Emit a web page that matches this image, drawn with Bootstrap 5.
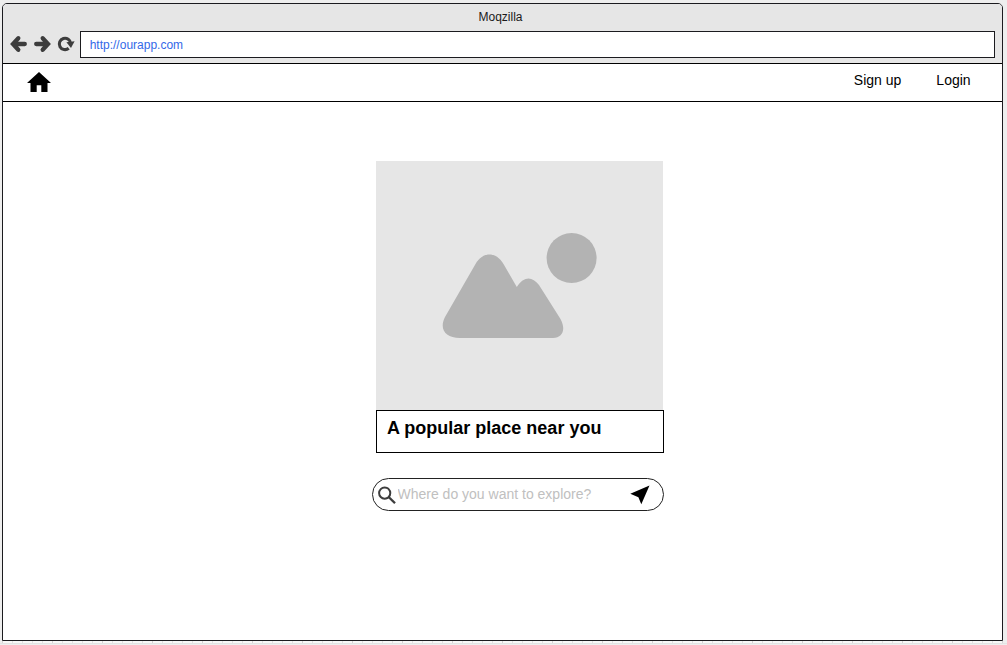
<!DOCTYPE html>
<html lang="en">
<head>
<meta charset="utf-8">
<meta name="viewport" content="width=device-width, initial-scale=1">
<title>Moqzilla</title>
<link href="https://cdn.jsdelivr.net/npm/bootstrap@5.3.0/dist/css/bootstrap.min.css" rel="stylesheet">
<style>
  body { font-family: "Liberation Sans", Arial, sans-serif; background: #eee; color: #000; height: 645px; overflow: hidden; line-height: 1; }
  svg { display: block; flex: none; }
  .browser { width: 1001px; height: 638px; margin: 3px 0 0 2px; border: 1px solid #1b1b1f; border-radius: 5px 5px 0 0; background: #fff; overflow: hidden; }
  .chrome-bar { height: 60px; background: #e6e6e6; border-bottom: 1px solid #000; }
  .window-title { height: 27px; line-height: 26px; font-size: 12px; padding-right: 4px; color: #1a1a1a; }
  .toolbar { height: 27px; padding: 0 7px; }
  .address { height: 27px; line-height: 26px; border: 1px solid #1b1b1f; background: #fff; padding-left: 8.7px; font-size: 12px; color: #3369e8; }
  .site-nav { height: 38px; border-bottom: 1px solid #000; padding: 0 31.4px 0 24px; font-size: 14px; }
  .site-nav a { color: #000; line-height: 32px; }
  .site-links { gap: 35px; }
  .place { width: 288px; margin: 59px 0 0 373px; }
  .place-image { width: 287px; height: 249px; background: #e6e6e6; }
  .place-name { height: 43px; border: 1px solid #000; padding-left: 10px; font-size: 18px; line-height: 34px; margin: 0; }
  .search-pill { width: 292px; height: 33px; margin: 25px 0 0 369px; border: 1px solid #222; border-radius: 17px; padding: 0 13px 0 5px; }
  .search-pill input { font-size: 14px; line-height: 16px; height: 31px; padding: 0 0 1px 1.5px; border: 0; outline: 0; background: none; min-width: 0; }
  .search-pill input::placeholder { color: #c0c0c0; opacity: 1; }
  .ruler { height: 2px; margin-left: 2px; width: 1001px; background:
    repeating-linear-gradient(90deg, #d4d4d4 0 1px, transparent 1px 50px),
    repeating-linear-gradient(90deg, #e2e2e2 0 1px, transparent 1px 10px), #f8f8f8; }
  .ruler-edge { height: 1px; background: #e4e4e4; }
</style>
</head>
<body>
<div class="browser">
  <header class="chrome-bar">
    <div class="window-title text-center">Moqzilla</div>
    <div class="toolbar d-flex align-items-center">
      <svg width="70" height="27" viewBox="10 31 70 27" fill="none" stroke="#3d3d3d" stroke-width="4">
        <path d="M18.300 38.200 13 44l5.300 5.800M14 44h10.800" stroke-width="4.300" stroke-linecap="round"/>
        <path d="M42.700 38.200 48 44l-5.300 5.800M47 44H36.200" stroke-width="4.300" stroke-linecap="round"/>
        <path d="M70.700 43.500A5.700 5.700 0 1 0 68.700 48.300" stroke-width="3.100"/>
        <path d="M66.400 42.300 74.600 41.200 71 48Z" fill="#3d3d3d" stroke="none"/>
      </svg>
      <div class="address flex-grow-1">http://ourapp.com</div>
    </div>
  </header>
  <nav class="site-nav d-flex justify-content-between align-items-start">
    <a href="#" aria-label="Home" class="pt-2">
      <svg width="24" height="20" viewBox="0 0 24 20"><path d="M12 0 24 11H20.500V20H14.300V13.200H9.700V20H3.500V11H0Z"/></svg>
    </a>
    <div class="site-links d-flex">
      <a href="#" class="text-decoration-none">Sign up</a>
      <a href="#" class="text-decoration-none">Login</a>
    </div>
  </nav>
  <main>
    <section class="place">
      <div class="place-image">
        <svg width="287" height="249" viewBox="376 161 287 249" fill="#b3b3b3">
          <circle cx="571.600" cy="258" r="25"/>
          <path d="M475.500 264C482.500 251.500 496 251 503.500 264L516.800 287C524 276 532 276 539 285L560.500 319C566 329 563 338 553 338H460C445 338 439 329 445 317Z"/>
        </svg>
      </div>
      <h1 class="place-name fw-bold">A popular place near you</h1>
    </section>
    <form class="search-pill d-flex align-items-center">
      <svg width="18" height="18" viewBox="378 485.500 18 18" fill="none" stroke="#3d3d3d" stroke-width="2"><circle cx="384.700" cy="492.600" r="5.600"/><path d="M388.700 496.500 395 502.700" stroke-width="2.300"/></svg>
      <input class="flex-grow-1" type="text" placeholder="Where do you want to explore?">
      <svg width="20" height="20" viewBox="0 0 20 20"><path d="M19.500.500 11.300 19.300 8.400 12.200.300 8.800Z"/></svg>
    </form>
  </main>
</div>
<div class="ruler"></div>
<div class="ruler-edge"></div>
<script src="https://cdn.jsdelivr.net/npm/bootstrap@5.3.0/dist/js/bootstrap.bundle.min.js"></script>
</body>
</html>
